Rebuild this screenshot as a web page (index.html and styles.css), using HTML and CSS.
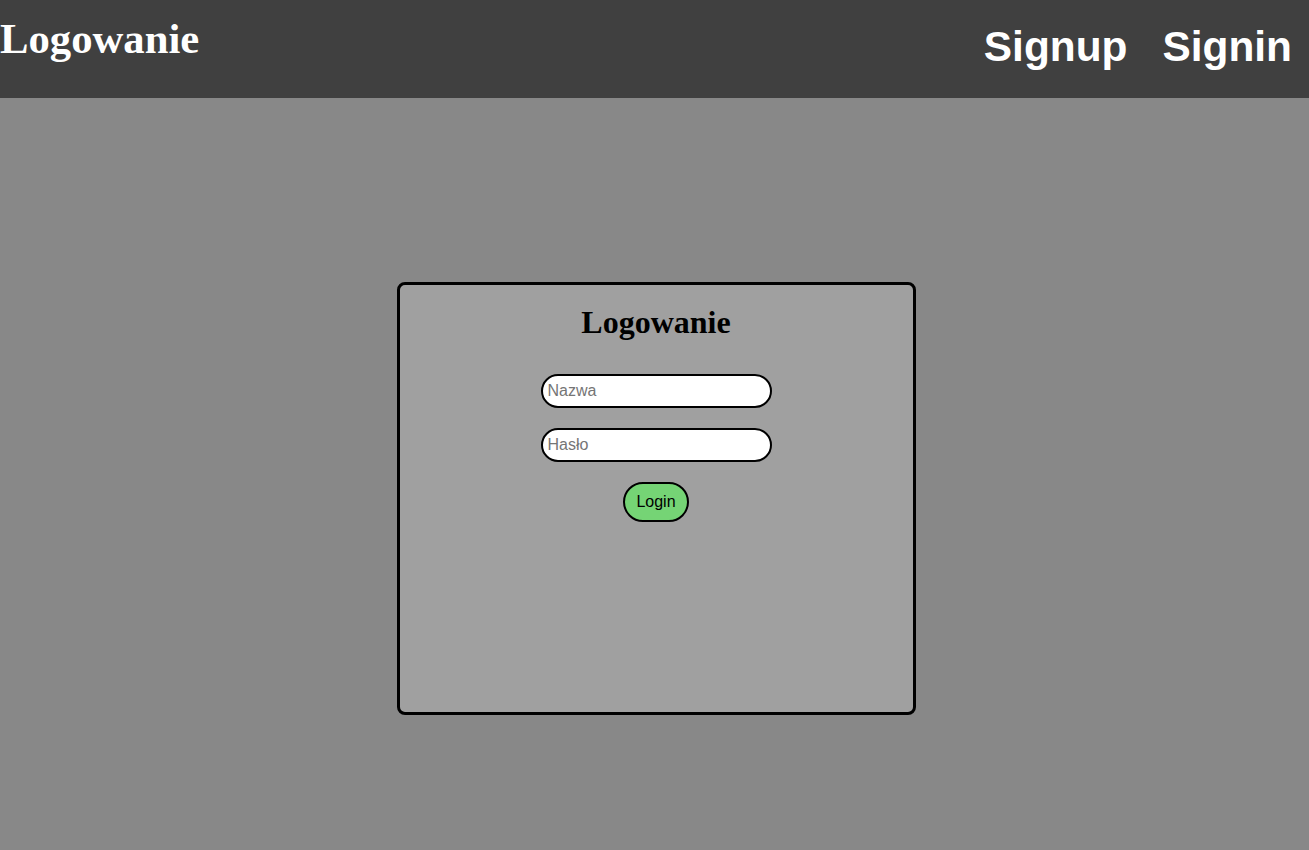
FILE: index.html
```html
<!DOCTYPE html>
<html lang="pl">
<head>
<meta charset="utf-8">
<title>Logowanie</title>
<link rel="stylesheet" href="styles.css">
</head>
<body>
<header class="topbar">
  <div class="brand">Logowanie</div>
  <nav class="nav">
    <a class="nav-link" href="#">Signup</a>
    <a class="nav-link" href="#">Signin</a>
  </nav>
</header>
<main class="main">
  <form class="card">
    <h2 class="card-title">Logowanie</h2>
    <input class="field" type="text" placeholder="Nazwa">
    <input class="field" type="password" placeholder="Hasło">
    <button class="btn" type="button">Login</button>
  </form>
</main>
</body>
</html>
```
FILE: styles.css
```css
* { box-sizing: border-box; }
html, body { margin: 0; height: 100%; }
body {
  background: #888888;
  font-family: "Liberation Serif", "Times New Roman", serif;
}
.topbar {
  height: 98px;
  background: #404040;
  display: flex;
  justify-content: space-between;
  align-items: flex-start;
}
.brand {
  color: #fff;
  font-weight: bold;
  font-size: 42.7px;
  line-height: 1;
  margin-top: 18px;
}
.nav {
  display: flex;
  gap: 35px;
  margin-top: 26px;
  padding-right: 17px;
}
.nav-link {
  color: #fff;
  text-decoration: none;
  font-family: "Liberation Sans", Arial, sans-serif;
  font-weight: bold;
  font-size: 42.4px;
  line-height: 1;
}
.main {
  display: flex;
  justify-content: center;
  padding-top: 184px;
  padding-left: 3px;
}
.card {
  width: 519px;
  height: 433px;
  background: #a0a0a0;
  border: 3px solid #000;
  border-radius: 8px;
  display: flex;
  flex-direction: column;
  align-items: center;
  margin: 0;
  padding-top: 21px;
}
.card-title {
  margin: 0 0 36px;
  font-size: 32px;
  line-height: 32px;
  font-weight: bold;
}
.field {
  width: 231px;
  height: 34px;
  border: 2px solid #000;
  border-radius: 17px;
  background: #fff;
  padding: 0 5px;
  font-family: "Liberation Sans", Arial, sans-serif;
  font-size: 16px;
  margin-bottom: 20px;
  outline: none;
}
.field::placeholder { color: #757575; }
.btn {
  width: 66px;
  height: 40px;
  border: 2px solid #000;
  border-radius: 20px;
  background: #75d475;
  font-family: "Liberation Sans", Arial, sans-serif;
  font-size: 16px;
  color: #000;
  padding: 0;
}
```
